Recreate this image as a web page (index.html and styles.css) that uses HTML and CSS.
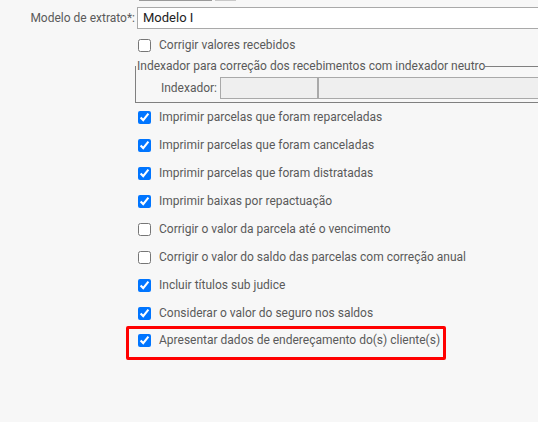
FILE: index.html
```html
<!DOCTYPE html>
<html lang="pt">
<head>
<meta charset="utf-8">
<link rel="stylesheet" href="styles.css">
</head>
<body>
<div class="page">
  <div class="top-strip"><span class="ts1"></span><span class="ts2"></span></div>
  <div class="field-row">
    <label class="field-label">Modelo de extrato*:</label>
    <div class="text-input">Modelo I</div>
  </div>
  <div class="options">
    <label class="opt"><input type="checkbox"><span>Corrigir valores recebidos</span></label>
    <fieldset class="group">
      <legend>Indexador para correção dos recebimentos com indexador neutro</legend>
      <div class="group-row">
        <span class="group-label">Indexador:</span>
        <div class="ro-input short"></div>
        <div class="ro-input long"></div>
      </div>
    </fieldset>
    <label class="opt"><input type="checkbox" checked><span>Imprimir parcelas que foram reparceladas</span></label>
    <label class="opt"><input type="checkbox" checked><span>Imprimir parcelas que foram canceladas</span></label>
    <label class="opt"><input type="checkbox" checked><span>Imprimir parcelas que foram distratadas</span></label>
    <label class="opt"><input type="checkbox" checked><span>Imprimir baixas por repactuação</span></label>
    <label class="opt"><input type="checkbox"><span>Corrigir o valor da parcela até o vencimento</span></label>
    <label class="opt"><input type="checkbox"><span>Corrigir o valor do saldo das parcelas com correção anual</span></label>
    <label class="opt"><input type="checkbox" checked><span>Incluir títulos sub judice</span></label>
    <label class="opt"><input type="checkbox" checked><span>Considerar o valor do seguro nos saldos</span></label>
    <div class="highlight">
      <label class="opt tight"><input type="checkbox" checked><span>Apresentar dados de endereçamento do(s) cliente(s)</span></label>
    </div>
  </div>
</div>
</body>
</html>
```

FILE: styles.css
```css
html, body {
  margin: 0;
  padding: 0;
  background: #f7f7f7;
  overflow: hidden;
}
body {
  font-family: Roboto, "Liberation Sans", sans-serif;
  font-size: 12px;
  color: #5a5a5a;
  width: 538px;
  height: 422px;
}
.page {
  width: 538px;
  overflow: hidden;
}
.top-strip {
  display: flex;
  height: 1px;
  padding-left: 139px;
}
.ts1 {
  width: 73px;
  height: 1px;
  background: #9a9a9a;
}
.ts2 {
  width: 21px;
  height: 1px;
  margin-left: 3px;
  background: #c8c8c8;
}
.field-row {
  display: flex;
  align-items: center;
  margin-top: 6px;
  width: 900px;
}
.field-label {
  padding-right: 2px;
  box-sizing: border-box;
  width: 137px;
  text-align: right;
  line-height: 22px;
}
.text-input {
  width: 500px;
  height: 22px;
  box-sizing: border-box;
  border: 1px solid #a9a9a9;
  background: #fff;
  color: #222;
  padding-left: 5px;
  line-height: 20px;
  font-size: 13px;
}
.options {
  margin-left: 138px;
  margin-top: 2px;
  width: 900px;
}
.opt {
  display: flex;
  align-items: center;
  height: 28px;
  white-space: nowrap;
}
.opt input {
  width: 13px;
  height: 13px;
  margin: 0 8px 0 0;
  accent-color: #0075ff;
}
.opt span {
  line-height: 15px;
}
.group {
  margin: 0 0 0 -3px;
  padding: 0 0 3px 0;
  border: 1px solid #808080;
  width: 700px;
  min-width: 0;
}
.group legend {
  padding: 0 0 0 1px;
  margin: 0;
  line-height: 15px;
  white-space: nowrap;
}
.group-row {
  display: flex;
  align-items: center;
  margin-top: 3px;
}
.group-label {
  width: 84px;
  padding-right: 3px;
  box-sizing: border-box;
  text-align: right;
}
.ro-input {
  height: 22px;
  box-sizing: border-box;
  border: 1px solid #a9a9a9;
  background: #efefef;
}
.ro-input.short {
  width: 98px;
}
.ro-input.long {
  width: 300px;
}
.highlight {
  margin: -1px 0 0 -12px;
  padding: 0 0 6px 9px;
  border: 3px solid #ff0000;
  border-radius: 2px;
  width: 320px;
  box-sizing: border-box;
}
.opt.tight {
  height: 22px;
}
```
